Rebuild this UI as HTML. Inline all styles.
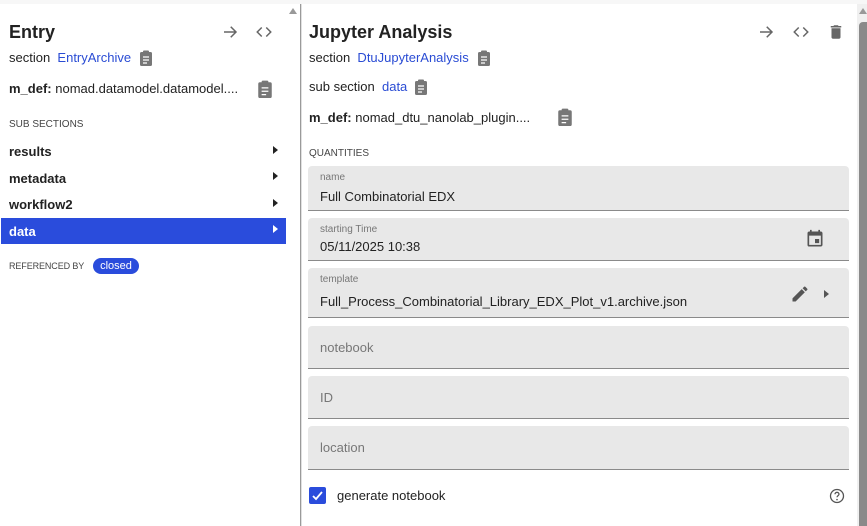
<!DOCTYPE html>
<html><head><meta charset="utf-8"><style>
*{margin:0;padding:0;box-sizing:border-box}
body{width:867px;height:526px;overflow:hidden;background:#f7f7f7;font-family:"Liberation Sans",sans-serif;color:#222;position:relative}
.a{position:absolute;white-space:nowrap}
.lp{position:absolute;left:0;top:4px;width:300px;height:522px;background:#fff}
.rp{position:absolute;left:302px;top:4px;width:555px;height:522px;background:#fff}
.h{font-size:18px;font-weight:bold;color:#222}
.t{font-size:13px}
.lk{color:#2a4cd4}
.cap{font-size:10px;color:#444}
.b{font-weight:bold}
.f{position:absolute;left:308px;width:541px;background:#e8e8e8;border-bottom:1px solid #8a8a8a;border-radius:4px 4px 0 0}
.f .l{position:absolute;left:12px;top:6px;font-size:10px;color:#777}
.f .v{position:absolute;left:12px;font-size:13px;color:#222}
.f .p{position:absolute;left:12px;font-size:13px;color:#777}
</style></head><body>
<div class="lp"></div>
<div class="a" style="left:289px;top:8px;width:0;height:0;border-left:4px solid transparent;border-right:4px solid transparent;border-bottom:6px solid #999"></div>
<div class="a" style="left:300px;top:4px;width:1px;height:522px;background:#9a9a9a"></div>
<div class="a" style="left:301px;top:4px;width:1px;height:522px;background:#e0e0e0"></div>
<div class="rp"></div>
<div class="a" style="left:857px;top:4px;width:10px;height:522px;background:#f0f0f0"></div>
<div class="a" style="left:859px;top:8px;width:0;height:0;border-left:4px solid transparent;border-right:4px solid transparent;border-bottom:6px solid #999"></div>
<div class="a" style="left:859px;top:22px;width:8px;height:504px;background:#8a8a8a;border-radius:4px 0 0 0"></div>

<!-- left -->
<div class="a h" style="left:9px;top:22px">Entry</div>
<svg class="a" style="left:221px;top:23px" width="18" height="18" viewBox="0 0 24 24"><path d="M4 12h15M13 5l7 7-7 7" stroke="#666" stroke-width="2" fill="none"/></svg>
<svg class="a" style="left:255px;top:23px" width="18" height="18" viewBox="0 0 24 24"><path d="M9 6l-6 6 6 6M15 6l6 6-6 6" stroke="#666" stroke-width="2" fill="none"/></svg>
<div class="a t" style="left:9px;top:50px">section <span class="lk">&nbsp;EntryArchive</span></div>
<svg class="a" style="left:139px;top:50px" width="14" height="16" viewBox="0 0 14 16"><rect x="1" y="2" width="12" height="14" rx="1.5" fill="#777"/><rect x="4" y="0.5" width="6" height="3" rx="1" fill="#777"/><path d="M4 7h6M4 10h6M4 13h4" stroke="#fff" stroke-width="1.2"/></svg>
<div class="a t" style="left:9px;top:81px"><span class="b">m_def:</span> nomad.datamodel.datamodel....</div>
<svg class="a" style="left:257px;top:80px" width="16" height="18" viewBox="0 0 14 16"><rect x="1" y="2" width="12" height="14" rx="1.5" fill="#777"/><rect x="4" y="0.5" width="6" height="3" rx="1" fill="#777"/><path d="M4 7h6M4 10h6M4 13h4" stroke="#fff" stroke-width="1.2"/></svg>
<div class="a cap" style="left:9px;top:119px">SUB SECTIONS</div>
<div class="a t b" style="left:9px;top:144px">results</div>
<div class="a t b" style="left:9px;top:171px">metadata</div>
<div class="a t b" style="left:9px;top:197px">workflow2</div>
<div class="a" style="left:1px;top:218px;width:285px;height:26px;background:#2a4cdc"></div>
<div class="a t b" style="left:9px;top:224px;color:#fff">data</div>
<div class="a" style="left:273px;top:146px;border-top:4px solid transparent;border-bottom:4px solid transparent;border-left:5px solid #222"></div>
<div class="a" style="left:273px;top:172px;border-top:4px solid transparent;border-bottom:4px solid transparent;border-left:5px solid #222"></div>
<div class="a" style="left:273px;top:199px;border-top:4px solid transparent;border-bottom:4px solid transparent;border-left:5px solid #222"></div>
<div class="a" style="left:273px;top:225px;border-top:4px solid transparent;border-bottom:4px solid transparent;border-left:5px solid #fff"></div>
<div class="a cap" style="left:9px;top:261px;font-size:9px;letter-spacing:-0.1px">REFERENCED BY</div>
<div class="a" style="left:93px;top:258px;width:46px;height:16px;border-radius:8px;background:#2a4cdc;color:#fff;font-size:11px;text-align:center;line-height:16px">closed</div>

<!-- right -->
<div class="a h" style="left:309px;top:22px">Jupyter Analysis</div>
<svg class="a" style="left:757px;top:23px" width="18" height="18" viewBox="0 0 24 24"><path d="M4 12h15M13 5l7 7-7 7" stroke="#666" stroke-width="2" fill="none"/></svg>
<svg class="a" style="left:792px;top:23px" width="18" height="18" viewBox="0 0 24 24"><path d="M9 6l-6 6 6 6M15 6l6 6-6 6" stroke="#666" stroke-width="2" fill="none"/></svg>
<svg class="a" style="left:827px;top:22px" width="18" height="20" viewBox="0 0 24 24"><path d="M6 19c0 1.1.9 2 2 2h8c1.1 0 2-.9 2-2V7H6v12zM19 4h-3.5l-1-1h-5l-1 1H5v2h14V4z" fill="#666"/></svg>
<div class="a t" style="left:309px;top:50px">section <span class="lk">&nbsp;DtuJupyterAnalysis</span></div>
<svg class="a" style="left:477px;top:50px" width="14" height="16" viewBox="0 0 14 16"><rect x="1" y="2" width="12" height="14" rx="1.5" fill="#777"/><rect x="4" y="0.5" width="6" height="3" rx="1" fill="#777"/><path d="M4 7h6M4 10h6M4 13h4" stroke="#fff" stroke-width="1.2"/></svg>
<div class="a t" style="left:309px;top:79px">sub section <span class="lk">&nbsp;data</span></div>
<svg class="a" style="left:414px;top:79px" width="14" height="16" viewBox="0 0 14 16"><rect x="1" y="2" width="12" height="14" rx="1.5" fill="#777"/><rect x="4" y="0.5" width="6" height="3" rx="1" fill="#777"/><path d="M4 7h6M4 10h6M4 13h4" stroke="#fff" stroke-width="1.2"/></svg>
<div class="a t" style="left:309px;top:110px"><span class="b">m_def:</span> nomad_dtu_nanolab_plugin....</div>
<svg class="a" style="left:557px;top:108px" width="16" height="18" viewBox="0 0 14 16"><rect x="1" y="2" width="12" height="14" rx="1.5" fill="#777"/><rect x="4" y="0.5" width="6" height="3" rx="1" fill="#777"/><path d="M4 7h6M4 10h6M4 13h4" stroke="#fff" stroke-width="1.2"/></svg>
<div class="a cap" style="left:309px;top:148px">QUANTITIES</div>

<div class="f" style="top:166px;height:45px"><div class="l">name</div><div class="v" style="top:23px">Full Combinatorial EDX</div></div>
<div class="f" style="top:218px;height:43px"><div class="l">starting Time</div><div class="v" style="top:21px">05/11/2025 10:38</div>
<svg class="a" style="left:497px;top:11px" width="20" height="20" viewBox="0 0 24 24"><path d="M17 12h-5v5h5v-5zM16 1v2H8V1H6v2H5c-1.11 0-2 .9-2 2v14a2 2 0 002 2h14c1.1 0 2-.9 2-2V5c0-1.1-.9-2-2-2h-1V1h-2zm3 18H5V8h14v11z" fill="#555"/></svg></div>
<div class="f" style="top:268px;height:50px"><div class="l">template</div><div class="v" style="top:26px">Full_Process_Combinatorial_Library_EDX_Plot_v1.archive.json</div>
<svg class="a" style="left:482px;top:16px" width="20" height="20" viewBox="0 0 24 24"><path d="M3 17.25V21h3.75L17.81 9.94l-3.75-3.75L3 17.25zM20.71 7.04a1 1 0 000-1.41l-2.34-2.34a1 1 0 00-1.41 0l-1.83 1.83 3.75 3.75 1.830-1.83z" fill="#555"/></svg>
<div class="a" style="left:516px;top:22px;border-top:4px solid transparent;border-bottom:4px solid transparent;border-left:5px solid #555"></div></div>
<div class="f" style="top:326px;height:43px"><div class="p" style="top:14px">notebook</div></div>
<div class="f" style="top:376px;height:43px"><div class="p" style="top:14px">ID</div></div>
<div class="f" style="top:426px;height:44px"><div class="p" style="top:14px">location</div></div>

<div class="a" style="left:309px;top:487px;width:17px;height:17px;background:#2a4cdc;border-radius:2px"></div>
<svg class="a" style="left:309px;top:487px" width="17" height="17" viewBox="0 0 17 17"><path d="M4 9l3 3 6-7" stroke="#fff" stroke-width="1.8" fill="none"/></svg>
<div class="a t" style="left:337px;top:488px">generate notebook</div>
<svg class="a" style="left:829px;top:488px" width="16" height="16" viewBox="0 0 16 16"><circle cx="8" cy="8" r="6.5" stroke="#555" stroke-width="1.3" fill="none"/><path d="M6 6.3a2 2 0 114 0c0 1.3-2 1.4-2 3" stroke="#555" stroke-width="1.3" fill="none"/><circle cx="8" cy="11.6" r=".8" fill="#555"/></svg>
</body></html>
